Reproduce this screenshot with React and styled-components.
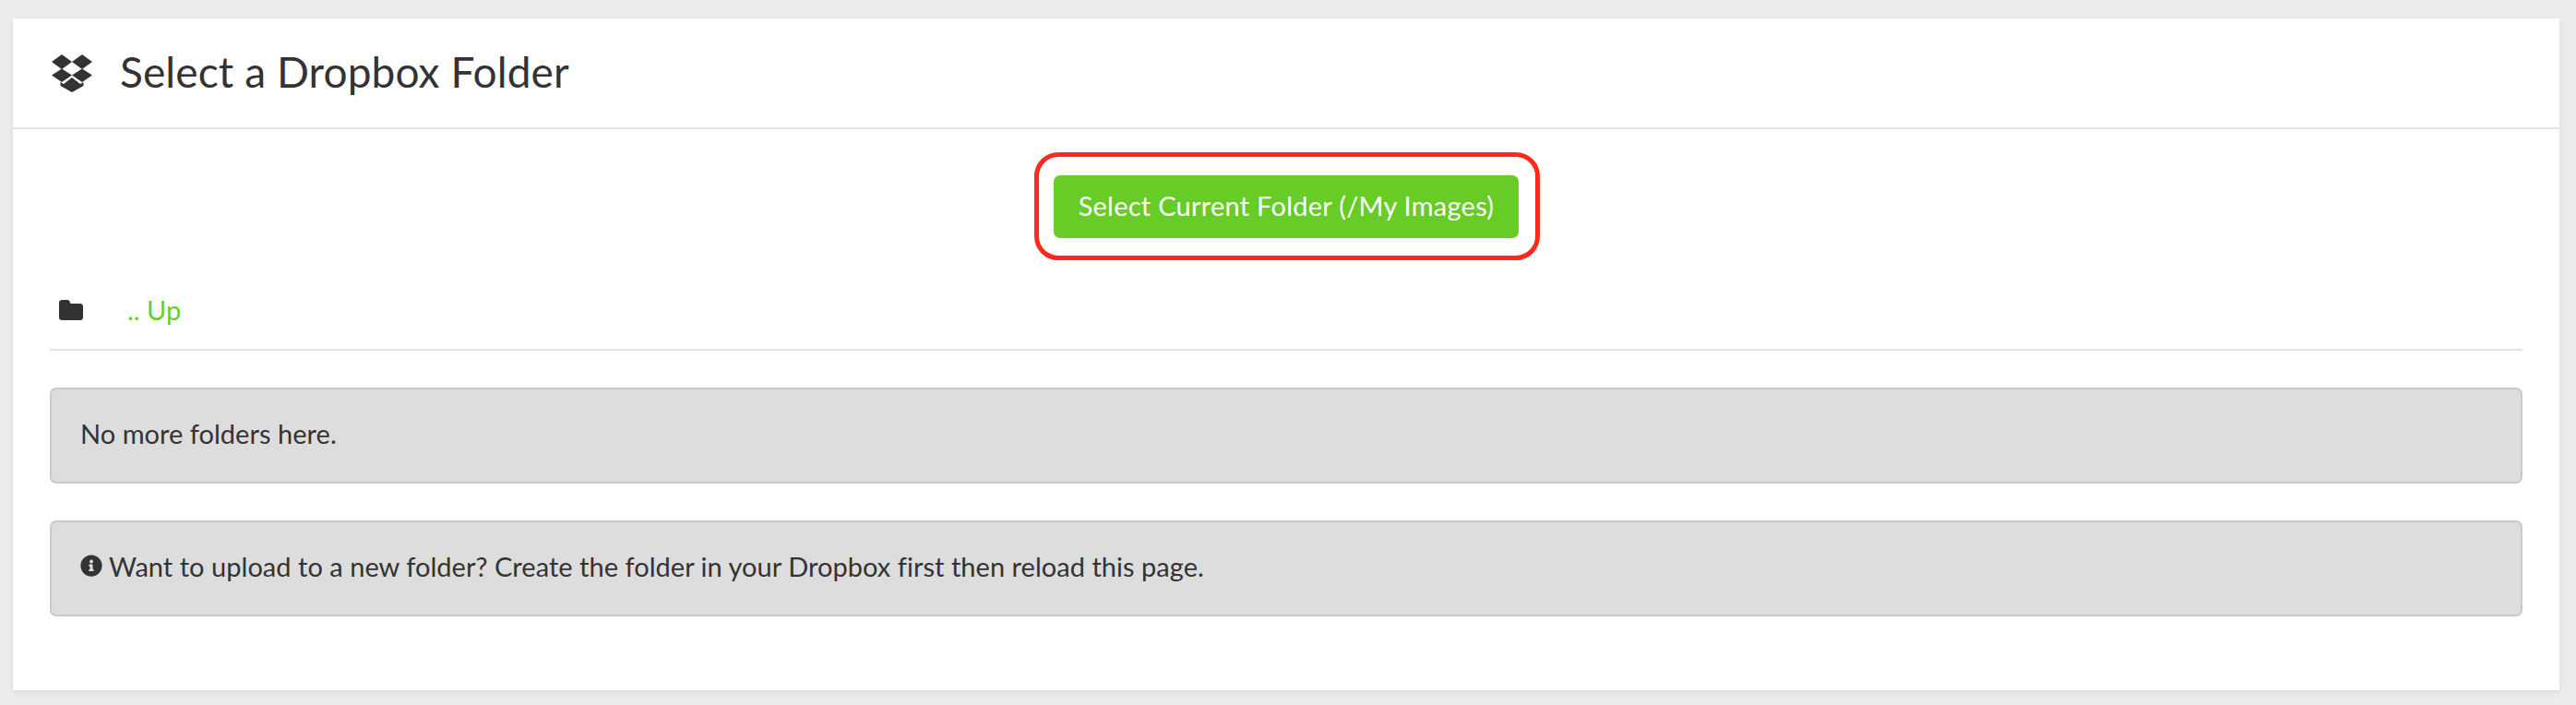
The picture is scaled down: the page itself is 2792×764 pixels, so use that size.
import React from 'react';
import styled, { createGlobalStyle } from 'styled-components';
import { FaInfoCircle } from 'react-icons/fa';

const GlobalStyle = createGlobalStyle`
  html, body {
    margin: 0;
    padding: 0;
    background: #ececec;
  }
  * {
    box-sizing: border-box;
  }
`;

const Page = styled.div`
  width: 2792px;
  height: 764px;
  padding: 20px 18px 16px 14px;
  background: #ececec;
  font-family: Lato, 'Open Sans', sans-serif;
  color: #333333;
`;

const Card = styled.div`
  height: 728px;
  background: #ffffff;
  box-shadow: 0 2px 6px rgba(0, 0, 0, 0.08);
`;

const Header = styled.div`
  height: 120px;
  padding-left: 42px;
  display: flex;
  align-items: center;
  gap: 30px;
  border-bottom: 2px solid #e3e3e3;
`;

const Title = styled.h1`
  margin: 0 0 3px;
  font-size: 46px;
  font-weight: 400;
  letter-spacing: 0.1px;
  color: #333333;
`;

const Body = styled.div`
  padding: 25px 40px 0;
`;

const ButtonRow = styled.div`
  display: flex;
  justify-content: center;
`;

const Highlight = styled.div`
  width: 548px;
  height: 117px;
  margin-left: 2px;
  border: 5px solid #ff2a1c;
  border-radius: 26px;
  display: flex;
  align-items: center;
  justify-content: center;
`;

const SelectButton = styled.button`
  width: 504px;
  height: 68px;
  margin-right: 2px;
  padding: 0 0 3px;
  border: none;
  border-radius: 7px;
  background: #67cc26;
  color: #ffffff;
  font-family: inherit;
  font-size: 29px;
  font-weight: 400;
  letter-spacing: 0.25px;
`;

const FolderRow = styled.div`
  height: 98px;
  padding-top: 11px;
  display: flex;
  align-items: center;
  border-bottom: 2px solid #e3e3e3;
`;

const FolderCell = styled.div`
  width: 84px;
  padding-left: 10px;
  display: flex;
  align-items: center;
`;

const UpLink = styled.a`
  color: #66d11f;
  font-size: 29px;
`;

const Alert = styled.div`
  height: 104px;
  margin-top: 40px;
  padding: 0 31px 6px;
  display: flex;
  align-items: center;
  gap: 7px;
  background: #dddddd;
  border: 2px solid #cacaca;
  border-radius: 7px;
  font-size: 29px;
  letter-spacing: 0.03px;
  color: #333333;
`;

const DropboxIcon = () => (
  <svg width="44" height="41" viewBox="0 0 44 41" fill="#333333">
    <path d="M11 0L22 8 11 16 0 8z" />
    <path d="M33 0L44 8 33 16 22 8z" />
    <path d="M11 15.500L22 22.500 11 30 0 22.500z" />
    <path d="M33 15.500L44 22.500 33 30 22 22.500z" />
    <path d="M22 25L31 32 34.500 30V34L22 41 9.500 34V30L13 32z" />
  </svg>
);

const FolderIcon = () => (
  <svg width="26" height="22" viewBox="0 0 26 22" fill="#333333">
    <path d="M3 0h6c1.500 0 2.500 1 3 2.500l.5 1.500H23c1.700 0 3 1.300 3 3v12c0 1.700-1.300 3-3 3H3c-1.700 0-3-1.300-3-3V3c0-1.700 1.300-3 3-3z" />
  </svg>
);

const App = () => (
  <Page>
    <GlobalStyle />
    <Card>
      <Header>
        <DropboxIcon />
        <Title>Select a Dropbox Folder</Title>
      </Header>
      <Body>
        <ButtonRow>
          <Highlight>
            <SelectButton>Select Current Folder (/My Images)</SelectButton>
          </Highlight>
        </ButtonRow>
        <FolderRow>
          <FolderCell>
            <FolderIcon />
          </FolderCell>
          <UpLink>.. Up</UpLink>
        </FolderRow>
        <Alert>No more folders here.</Alert>
        <Alert>
          <FaInfoCircle size={24} color="#333333" />
          Want to upload to a new folder? Create the folder in your Dropbox first then reload this page.
        </Alert>
      </Body>
    </Card>
  </Page>
);

export default App;
